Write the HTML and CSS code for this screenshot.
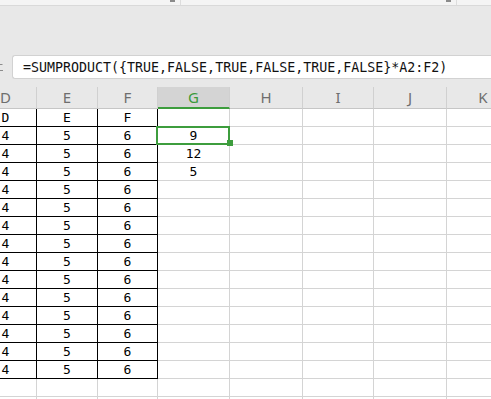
FILE: index.html
```html
<!DOCTYPE html>
<html>
<head>
<meta charset="utf-8">
<link rel="stylesheet" href="styles.css">
</head>
<body>
<div class="top"><span class="mark m1"></span><span class="sep"></span><span class="mark m2"></span><span class="sep"></span></div>
<div class="toolbar">
  <svg class="fx" width="4" height="10" viewBox="0 0 4 10"><path d="M0 1.5H2.5M0 7.5H3" stroke="#8c8c8c" stroke-width="1" fill="none"/></svg>
  <div class="formula">=SUMPRODUCT({TRUE,FALSE,TRUE,FALSE,TRUE,FALSE}*A2:F2)</div>
</div>
<div class="sheet">
  <div class="h">D</div><div class="h">E</div><div class="h">F</div><div class="h act">G</div><div class="h">H</div><div class="h">I</div><div class="h">J</div><div class="h">K</div>

  <div class="c b">D</div><div class="c b">E</div><div class="c b">F</div><div class="c"></div><div class="c"></div><div class="c"></div><div class="c"></div><div class="c"></div>
  <div class="c b">4</div><div class="c b">5</div><div class="c b">6</div><div class="c cur">9<span class="sel"><span class="handle"></span></span></div><div class="c"></div><div class="c"></div><div class="c"></div><div class="c"></div>
  <div class="c b">4</div><div class="c b">5</div><div class="c b">6</div><div class="c">12</div><div class="c"></div><div class="c"></div><div class="c"></div><div class="c"></div>
  <div class="c b">4</div><div class="c b">5</div><div class="c b">6</div><div class="c">5</div><div class="c"></div><div class="c"></div><div class="c"></div><div class="c"></div>
  <div class="c b">4</div><div class="c b">5</div><div class="c b">6</div><div class="c"></div><div class="c"></div><div class="c"></div><div class="c"></div><div class="c"></div>
  <div class="c b">4</div><div class="c b">5</div><div class="c b">6</div><div class="c"></div><div class="c"></div><div class="c"></div><div class="c"></div><div class="c"></div>
  <div class="c b">4</div><div class="c b">5</div><div class="c b">6</div><div class="c"></div><div class="c"></div><div class="c"></div><div class="c"></div><div class="c"></div>
  <div class="c b">4</div><div class="c b">5</div><div class="c b">6</div><div class="c"></div><div class="c"></div><div class="c"></div><div class="c"></div><div class="c"></div>
  <div class="c b">4</div><div class="c b">5</div><div class="c b">6</div><div class="c"></div><div class="c"></div><div class="c"></div><div class="c"></div><div class="c"></div>
  <div class="c b">4</div><div class="c b">5</div><div class="c b">6</div><div class="c"></div><div class="c"></div><div class="c"></div><div class="c"></div><div class="c"></div>
  <div class="c b">4</div><div class="c b">5</div><div class="c b">6</div><div class="c"></div><div class="c"></div><div class="c"></div><div class="c"></div><div class="c"></div>
  <div class="c b">4</div><div class="c b">5</div><div class="c b">6</div><div class="c"></div><div class="c"></div><div class="c"></div><div class="c"></div><div class="c"></div>
  <div class="c b">4</div><div class="c b">5</div><div class="c b">6</div><div class="c"></div><div class="c"></div><div class="c"></div><div class="c"></div><div class="c"></div>
  <div class="c b">4</div><div class="c b">5</div><div class="c b">6</div><div class="c"></div><div class="c"></div><div class="c"></div><div class="c"></div><div class="c"></div>
  <div class="c b">4</div><div class="c b">5</div><div class="c b">6</div><div class="c"></div><div class="c"></div><div class="c"></div><div class="c"></div><div class="c"></div>
  <div class="c"></div><div class="c"></div><div class="c"></div><div class="c"></div><div class="c"></div><div class="c"></div><div class="c"></div><div class="c"></div>
  <div class="c"></div><div class="c"></div><div class="c"></div><div class="c"></div><div class="c"></div><div class="c"></div><div class="c"></div><div class="c"></div>
</div>
</body>
</html>
```
FILE: styles.css
```css
html, body {
  margin: 0;
  padding: 0;
}
body {
  width: 491px;
  height: 399px;
  overflow: hidden;
  background: #ffffff;
}
.top {
  display: flex;
  height: 5px;
  background: #f4f4f4;
  border-bottom: 1px solid #d9d9d9;
}
.mark {
  width: 5px;
  height: 2px;
  background: #8a8a8a;
}
.m1 { margin-left: 170px; }
.m2 { margin-left: 265px; }
.sep {
  margin-left: 5px;
  width: 1px;
  height: 5px;
  background: #dddddd;
}
.toolbar {
  display: flex;
  align-items: center;
  height: 81px;
  box-sizing: border-box;
  padding: 49px 0 8px 0;
  background: #e8e8e8;
}
.fx {
  flex: none;
  display: block;
  margin-right: 8px;
  margin-top: 2px;
}
.formula {
  flex: none;
  width: 520px;
  height: 24px;
  box-sizing: border-box;
  border: 1px solid #d2d2d2;
  border-right: none;
  border-radius: 3px 0 0 3px;
  background: #ffffff;
  padding: 1px 0 0 10px;
  font-family: "DejaVu Sans Mono", monospace;
  font-size: 13.3px;
  line-height: 21px;
  color: #111111;
  white-space: nowrap;
}
.sheet {
  display: grid;
  grid-template-columns: 62px 61px 60px 72px 73px 71px 73px 73px;
  grid-template-rows: 22px;
  grid-auto-rows: 18px;
  margin-left: -25px;
  width: 545px;
}
.h {
  box-sizing: border-box;
  background: #e8e8e8;
  border-right: 1px solid #d0d0d0;
  border-bottom: 1px solid #c6c6c6;
  text-align: center;
  font-family: "Noto Sans", sans-serif;
  font-size: 15px;
  line-height: 21px;
  color: #6e6e6e;
}
.h.act {
  background: #d4d4d4;
  border-bottom: 2px solid #3d9d3d;
  color: #3a9a3a;
}
.c {
  box-sizing: border-box;
  border-right: 1px solid #d4d4d4;
  border-bottom: 1px solid #d4d4d4;
  text-align: center;
  font-family: "DejaVu Sans Mono", monospace;
  font-size: 13px;
  line-height: 18px;
  color: #000000;
}
.c.b {
  border-right-color: #000000;
  border-bottom-color: #000000;
}
.cur {
  position: relative;
}
.sel {
  position: absolute;
  top: -1px;
  left: -2px;
  right: -1px;
  bottom: -1px;
  border: 2px solid #3d9d3d;
}
.handle {
  position: absolute;
  right: -5px;
  bottom: -3px;
  width: 6px;
  height: 6px;
  background: #3d9d3d;
}
```
